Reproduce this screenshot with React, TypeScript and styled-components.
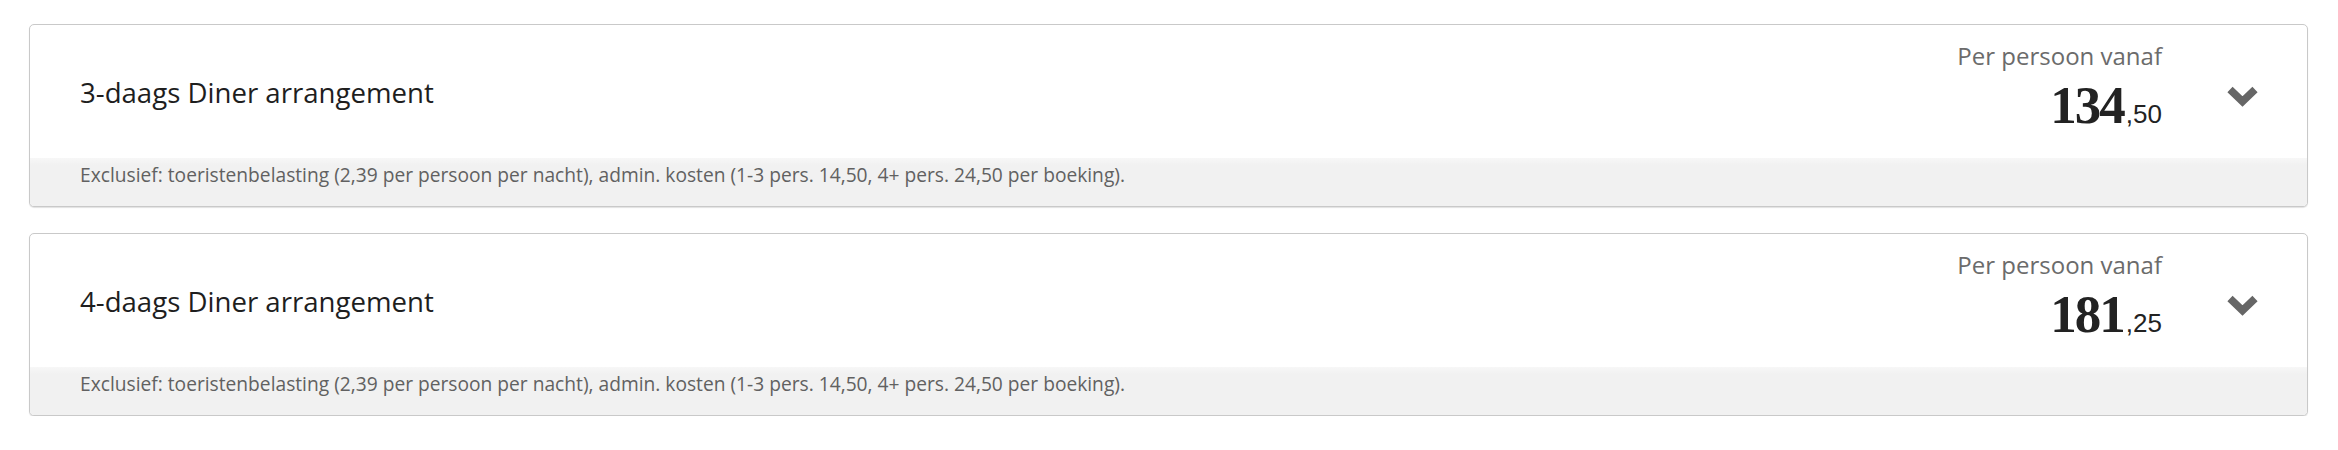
import React from "react";
import styled, { createGlobalStyle } from "styled-components";

const GlobalStyle = createGlobalStyle`
  html, body {
    margin: 0;
    padding: 0;
    background: #ffffff;
  }
  body {
    font-family: "Open Sans", "Liberation Sans", sans-serif;
    color: #222;
  }
`;

const Page = styled.div`
  display: flex;
  flex-direction: column;
  gap: 26px;
  padding: 24px 30px 0 29px;
`;

const Card = styled.section`
  display: flex;
  flex-direction: column;
  border: 1px solid #c9c9c9;
  border-radius: 5px;
  background: #ffffff;
  box-shadow: 0 1px 1px rgba(0, 0, 0, 0.12);
  overflow: hidden;
`;

const Header = styled.div`
  display: flex;
  align-items: center;
  height: 133px;
  padding: 0 48px 0 50px;
`;

const Title = styled.h2`
  flex: 1;
  margin: 0;
  font-family: "Open Sans", sans-serif;
  font-weight: 400;
  font-size: 27.6px;
  color: #1e1e1e;
`;

const PriceBlock = styled.div`
  display: flex;
  flex-direction: column;
  align-items: flex-end;
  margin-bottom: 8px;
`;

const Label = styled.div`
  font-family: "Open Sans", sans-serif;
  font-size: 24px;
  line-height: 32px;
  color: #6b6b6b;
`;

const PriceLine = styled.div`
  margin-top: 11px;
  font-family: "Liberation Serif", serif;
  font-size: 53px;
  line-height: 44px;
  color: #222;
`;

const Whole = styled.span`
  font-weight: 700;
  letter-spacing: -2px;
`;

const Cents = styled.span`
  font-family: "Liberation Sans", Arial, sans-serif;
  font-weight: 400;
  font-size: 26px;
  margin-left: 2px;
`;

const Toggle = styled.button`
  display: flex;
  align-items: center;
  justify-content: center;
  margin: 10px 0 0 64px;
  padding: 0;
  border: 0;
  background: transparent;
  width: 33px;
  height: 23px;
  cursor: pointer;
`;

const Footer = styled.div`
  box-sizing: border-box;
  height: 48px;
  padding: 4px 50px 0;
  background: linear-gradient(#f7f7f7, #f1f1f1 7px);
  font-family: "Open Sans", sans-serif;
  font-size: 19.2px;
  line-height: 25px;
  color: #616161;
`;

const Chevron = () => (
  <svg width="33" height="23" viewBox="0 0 33 23" aria-hidden="true">
    <polyline
      points="4,4.5 16.5,16.5 29,4.5"
      fill="none"
      stroke="#666"
      strokeWidth="7.5"
      strokeLinecap="butt"
      strokeLinejoin="miter"
    />
  </svg>
);

const items = [
  { title: "3-daags Diner arrangement", whole: "134", cents: ",50" },
  { title: "4-daags Diner arrangement", whole: "181", cents: ",25" },
];

const note =
  "Exclusief: toeristenbelasting (2,39 per persoon per nacht), admin. kosten (1-3 pers. 14,50, 4+ pers. 24,50 per boeking).";

export default function App() {
  return (
    <>
      <GlobalStyle />
      <Page>
        {items.map((it) => (
          <Card key={it.title}>
            <Header>
              <Title>{it.title}</Title>
              <PriceBlock>
                <Label>Per persoon vanaf</Label>
                <PriceLine>
                  <Whole>{it.whole}</Whole>
                  <Cents>{it.cents}</Cents>
                </PriceLine>
              </PriceBlock>
              <Toggle aria-label="Uitklappen">
                <Chevron />
              </Toggle>
            </Header>
            <Footer>{note}</Footer>
          </Card>
        ))}
      </Page>
    </>
  );
}
